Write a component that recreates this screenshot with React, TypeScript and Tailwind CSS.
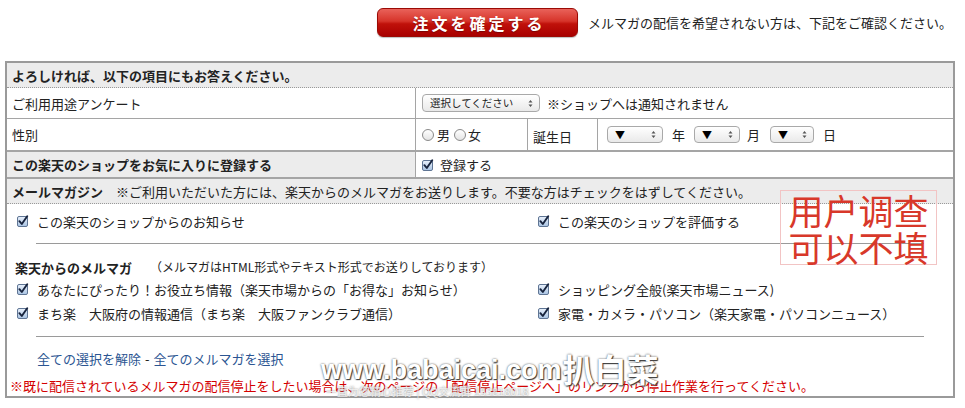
import React from "react";

const CheckBox = () => (
  <svg width="12" height="12" viewBox="0 0 12 12" className="shrink-0">
    <defs>
      <linearGradient id="cbg" x1="0" y1="0" x2="0" y2="1">
        <stop offset="0" stopColor="#e9f1fb" />
        <stop offset="1" stopColor="#a9c3e3" />
      </linearGradient>
    </defs>
    <rect x="0.5" y="1.5" width="10" height="10" rx="1.5" fill="url(#cbg)" stroke="#5f7594" />
    <path d="M2.4 6.2 L4.8 9 L10.2 1.2" fill="none" stroke="#17233d" strokeWidth="1.9" strokeLinecap="round" strokeLinejoin="round" />
  </svg>
);

const Radio = () => (
  <span className="inline-block h-[12px] w-[12px] shrink-0 rounded-full border border-[#8a8a8a] bg-[linear-gradient(to_bottom,#ffffff,#e4e4e4)]" />
);

const Arrows = () => (
  <svg width="5" height="9" viewBox="0 0 5 9" className="shrink-0">
    <path d="M0.5 3.6 L2.5 1 L4.5 3.6Z M0.5 5.4 L2.5 8 L4.5 5.4Z" fill="#555" />
  </svg>
);

export default function App() {
  return (
    <div className="relative h-[408px] w-[965px] overflow-hidden bg-white text-[13px] leading-none text-[#222] [font-family:'Noto_Sans_CJK_JP','Noto_Sans_CJK_SC',sans-serif]">
      {/* top bar */}
      <div className="flex items-center pl-[377px] pt-[8px]">
        <div className="flex h-[29px] w-[201px] items-center justify-center rounded-[6px] border border-[#9b0a05] bg-[linear-gradient(to_bottom,#e9625a,#d6342a_45%,#c0110a_55%,#a80000)] shadow-[0_1px_1px_rgba(0,0,0,0.25)]">
          <span className="pl-[3px] text-[16px] font-bold tracking-[3px] text-white [text-shadow:0_1px_1px_rgba(90,0,0,0.6)]">
            注文を確定する
          </span>
        </div>
        <span className="ml-[10px] text-[13px] text-[#222]">
          メルマガの配信を希望されない方は、下記をご確認ください。
        </span>
      </div>

      {/* table */}
      <div className="ml-[5px] mt-[24px] w-[950px] border-2 border-[#9a9a9a]">
        <div className="flex h-[25px] items-center border-b border-dotted border-[#999] bg-[#ececec] pl-[5px] font-bold">
          よろしければ、以下の項目にもお答えください。
        </div>

        <div className="flex h-[31px] border-b border-[#a5a5a5]">
          <div className="flex w-[409px] items-center border-r border-[#a5a5a5] pl-[5px]">ご利用用途アンケート</div>
          <div className="flex items-center pl-[6px]">
            <div className="flex h-[18px] w-[118px] items-center justify-between rounded-[4px] border border-[#a9a9a9] bg-[linear-gradient(to_bottom,#ffffff,#e9e9e9)] pl-[7px] pr-[6px] text-[10.5px] text-[#222]">
              <span>選択してください</span>
              <Arrows />
            </div>
            <span className="ml-[7px]">※ショップへは通知されません</span>
          </div>
        </div>

        <div className="flex h-[33px] border-b-2 border-[#a5a5a5]">
          <div className="flex w-[409px] items-center border-r border-[#a5a5a5] pl-[5px]">性別</div>
          <div className="flex w-[112px] items-center border-r border-[#a5a5a5] pl-[6px]">
            <Radio />
            <span className="ml-[3px]">男</span>
            <span className="ml-[4px] flex"><Radio /></span>
            <span className="ml-[2px]">女</span>
          </div>
          <div className="flex w-[70px] items-center border-r border-[#a5a5a5] pl-[5px] pt-[4px]">誕生日</div>
          <div className="flex items-center pl-[9px]">
            <div className="flex h-[17px] w-[56px] items-center justify-between rounded-[4px] border border-[#a9a9a9] bg-[linear-gradient(to_bottom,#ffffff,#e9e9e9)] pl-[7px] pr-[6px]">
              <span className="text-[10px] text-black">▼</span>
              <Arrows />
            </div>
            <span className="ml-[9px]">年</span>
            <div className="ml-[9px] flex h-[17px] w-[46px] items-center justify-between rounded-[4px] border border-[#a9a9a9] bg-[linear-gradient(to_bottom,#ffffff,#e9e9e9)] pl-[7px] pr-[6px]">
              <span className="text-[10px] text-black">▼</span>
              <Arrows />
            </div>
            <span className="ml-[7px]">月</span>
            <div className="ml-[10px] flex h-[17px] w-[44px] items-center justify-between rounded-[4px] border border-[#a9a9a9] bg-[linear-gradient(to_bottom,#ffffff,#e9e9e9)] pl-[7px] pr-[6px]">
              <span className="text-[10px] text-black">▼</span>
              <Arrows />
            </div>
            <span className="ml-[9px]">日</span>
          </div>
        </div>

        <div className="flex h-[27px] border-b-2 border-[#a5a5a5]">
          <div className="flex w-[409px] items-center border-r border-[#a5a5a5] bg-[#ececec] pl-[5px] font-bold">
            この楽天のショップをお気に入りに登録する
          </div>
          <div className="flex items-center pl-[6px]">
            <CheckBox />
            <span className="ml-[6px]">登録する</span>
          </div>
        </div>

        <div className="flex h-[25px] items-center border-b border-dotted border-[#999] bg-[#ececec] pl-[5px]">
          <span className="font-bold">メールマガジン</span>
          <span className="ml-[13px]">※ご利用いただいた方には、楽天からのメルマガをお送りします。不要な方はチェックをはずしてください。</span>
        </div>

        <div className="pt-[7px]">
          <div className="grid h-[20px] grid-cols-[521px_1fr] items-center pl-[10px]">
            <div className="flex items-center">
              <CheckBox />
              <span className="ml-[8px]">この楽天のショップからのお知らせ</span>
            </div>
            <div className="flex items-center">
              <CheckBox />
              <span className="ml-[8px]">この楽天のショップを評価する</span>
            </div>
          </div>

          <div className="ml-[29px] mt-[12px] h-px w-[888px] bg-[#9a9a9a]" />

          <div className="mt-[13px] flex h-[20px] items-center pl-[8px]">
            <span className="font-bold">楽天からのメルマガ</span>
            <span className="ml-[18px] text-[12px]">（メルマガはHTML形式やテキスト形式でお送りしております）</span>
          </div>

          <div className="grid h-[24px] grid-cols-[521px_1fr] items-center pl-[10px]">
            <div className="flex items-center">
              <CheckBox />
              <span className="ml-[8px]">あなたにぴったり！お役立ち情報（楽天市場からの「お得な」お知らせ）</span>
            </div>
            <div className="flex items-center">
              <CheckBox />
              <span className="ml-[8px]">ショッピング全般(楽天市場ニュース)</span>
            </div>
          </div>
          <div className="grid h-[24px] grid-cols-[521px_1fr] items-center pl-[10px]">
            <div className="flex items-center">
              <CheckBox />
              <span className="ml-[8px]">まち楽　大阪府の情報通信（まち楽　大阪ファンクラブ通信）</span>
            </div>
            <div className="flex items-center">
              <CheckBox />
              <span className="ml-[8px]">家電・カメラ・パソコン（楽天家電・パソコンニュース）</span>
            </div>
          </div>

          <div className="ml-[29px] mt-[11px] h-px w-[888px] bg-[#9a9a9a]" />

          <div className="mt-[11px] flex h-[20px] items-center pl-[30px]">
            <span className="text-[#2b5592]">全ての選択を解除</span>
            <span className="mx-[4px]">-</span>
            <span className="text-[#2b5592]">全てのメルマガを選択</span>
          </div>

          <div className="mt-[7px] flex h-[21px] items-center pl-[3px] text-[#d40000]">
            ※既に配信されているメルマガの配信停止をしたい場合は、次のページの「配信停止ページへ」のリンクから停止作業を行ってください。
          </div>
        </div>
      </div>

      {/* annotation overlay */}
      <div className="absolute left-[780px] top-[190px] flex h-[75px] w-[157px] flex-col items-center justify-center border border-[#f2c4c4] text-[35px] leading-[37px] text-[#d8382a] [font-family:'Noto_Sans_CJK_SC',sans-serif]">
        <span>用户调查</span>
        <span>可以不填</span>
      </div>

      {/* watermark */}
      <div className="absolute left-[321px] top-[352px] flex items-end text-white [text-shadow:0_0_2px_#444,1px_1px_1px_#333]">
        <span className="text-[27px] font-bold leading-none [font-family:'Liberation_Sans',sans-serif]">www.babaicai.com</span>
        <span className="ml-[1px] text-[32px] font-bold leading-none [font-family:'Noto_Sans_CJK_SC',sans-serif]">扒白菜</span>
      </div>
      <div className="absolute left-[326px] top-[386px] text-[11px] leading-none text-white/80 [font-family:'Noto_Sans_CJK_SC',sans-serif] [text-shadow:0_0_2px_#777]">
        一直为您精心推荐 | QQ交流群 153818018
      </div>
    </div>
  );
}
